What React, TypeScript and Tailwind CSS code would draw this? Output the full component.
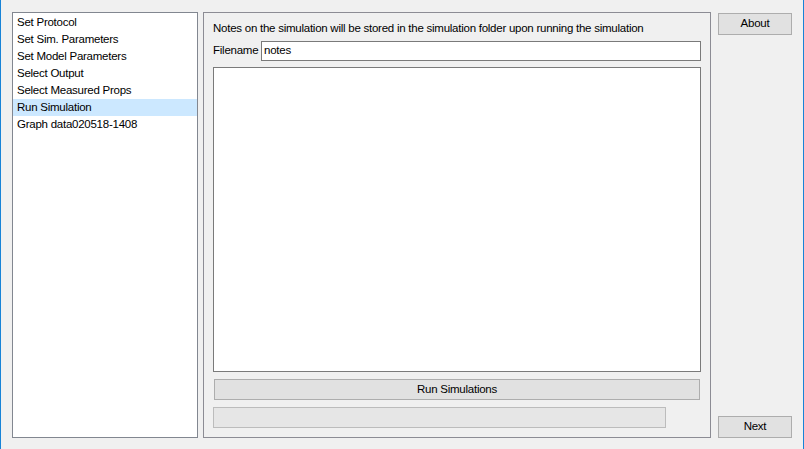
const steps = [
  'Set Protocol',
  'Set Sim. Parameters',
  'Set Model Parameters',
  'Select Output',
  'Select Measured Props',
  'Run Simulation',
  'Graph data020518-1408',
]

export default function App() {
  return (
    <div className="w-[804px] h-[449px] bg-[#f0f0f0] border-x border-[#1883d7] flex pt-[12px] pl-[11px] pb-[11px] text-[11.5px] tracking-[-0.25px] text-black font-['Liberation_Sans',sans-serif] leading-none">
      <div className="w-[186px] h-[426px] bg-white border border-[#828790] pt-[1px]">
        {steps.map((s, i) => (
          <div
            key={s}
            className={`h-[17px] pl-[4px] pt-[1px] flex items-center whitespace-nowrap ${i === 5 ? 'bg-[#cce8ff]' : ''}`}
          >
            {s}
          </div>
        ))}
      </div>

      <div className="ml-[5px] w-[508px] h-[426px] border border-[#8c8c94] flex flex-col px-[9px] pt-[8px]">
        <div className="h-[16px] flex items-center whitespace-nowrap">
          Notes on the simulation will be stored in the simulation folder upon running the simulation
        </div>
        <div className="mt-[4px] flex items-center">
          <span className="w-[48px] shrink-0">Filename</span>
          <div className="w-[440px] h-[20px] bg-white border border-[#7a7a7a] flex items-center pl-[2px]">notes</div>
        </div>
        <div className="mt-[6px] w-[488px] h-[305px] bg-white border border-[#7a7a7a]" />
        <div className="mt-[7px] ml-[1px] w-[486px] h-[21px] bg-[#e1e1e1] border border-[#adadad] flex items-center justify-center">
          Run Simulations
        </div>
        <div className="mt-[7px] w-[453px] h-[21px] bg-[#e6e6e6] border border-[#bcbcbc]" />
      </div>

      <div className="ml-[7px] w-[74px] flex flex-col justify-between pt-[1px]">
        <div className="h-[22px] bg-[#e1e1e1] border border-[#adadad] flex items-center justify-center">About</div>
        <div className="h-[22px] bg-[#e1e1e1] border border-[#adadad] flex items-center justify-center">Next</div>
      </div>
    </div>
  )
}
